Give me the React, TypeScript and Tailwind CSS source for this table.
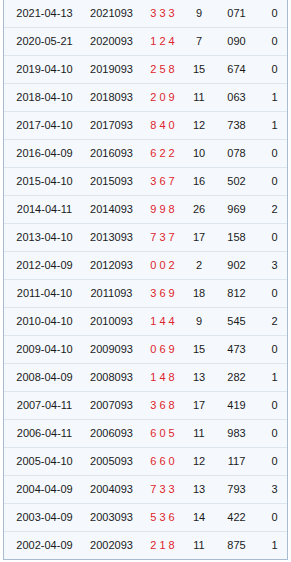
import React from 'react';

type Draw = {
  date: string;
  issue: string;
  nums: string;
  sum: string;
  code: string;
  flag: string;
};

const rows: Draw[] = [
  { date: '2021-04-13', issue: '2021093', nums: '3 3 3', sum: '9', code: '071', flag: '0' },
  { date: '2020-05-21', issue: '2020093', nums: '1 2 4', sum: '7', code: '090', flag: '0' },
  { date: '2019-04-10', issue: '2019093', nums: '2 5 8', sum: '15', code: '674', flag: '0' },
  { date: '2018-04-10', issue: '2018093', nums: '2 0 9', sum: '11', code: '063', flag: '1' },
  { date: '2017-04-10', issue: '2017093', nums: '8 4 0', sum: '12', code: '738', flag: '1' },
  { date: '2016-04-09', issue: '2016093', nums: '6 2 2', sum: '10', code: '078', flag: '0' },
  { date: '2015-04-10', issue: '2015093', nums: '3 6 7', sum: '16', code: '502', flag: '0' },
  { date: '2014-04-11', issue: '2014093', nums: '9 9 8', sum: '26', code: '969', flag: '2' },
  { date: '2013-04-10', issue: '2013093', nums: '7 3 7', sum: '17', code: '158', flag: '0' },
  { date: '2012-04-09', issue: '2012093', nums: '0 0 2', sum: '2', code: '902', flag: '3' },
  { date: '2011-04-10', issue: '2011093', nums: '3 6 9', sum: '18', code: '812', flag: '0' },
  { date: '2010-04-10', issue: '2010093', nums: '1 4 4', sum: '9', code: '545', flag: '2' },
  { date: '2009-04-10', issue: '2009093', nums: '0 6 9', sum: '15', code: '473', flag: '0' },
  { date: '2008-04-09', issue: '2008093', nums: '1 4 8', sum: '13', code: '282', flag: '1' },
  { date: '2007-04-11', issue: '2007093', nums: '3 6 8', sum: '17', code: '419', flag: '0' },
  { date: '2006-04-11', issue: '2006093', nums: '6 0 5', sum: '11', code: '983', flag: '0' },
  { date: '2005-04-10', issue: '2005093', nums: '6 6 0', sum: '12', code: '117', flag: '0' },
  { date: '2004-04-09', issue: '2004093', nums: '7 3 3', sum: '13', code: '793', flag: '3' },
  { date: '2003-04-09', issue: '2003093', nums: '5 3 6', sum: '14', code: '422', flag: '0' },
  { date: '2002-04-09', issue: '2002093', nums: '2 1 8', sum: '11', code: '875', flag: '1' },
];

export default function App() {
  return (
    <div className="min-h-[562px] bg-white pl-[3px] w-[291px]">
      <div
        className="w-[285px] bg-[#f5f9fe] border-l border-r border-b border-[#a8bbd0] text-[11px] text-[#1a1a1a]"
        style={{ fontFamily: '"Liberation Sans", Arial, sans-serif' }}
      >
        {rows.map((r, i) => (
          <div
            key={r.issue}
            className={
              'grid grid-cols-[81px_53px_49px_24px_51px_1fr] items-center text-center' +
              (i < rows.length - 1 ? ' h-[28px] border-b border-[#dde5ee]' : ' h-[27px]')
            }
          >
            <span>{r.date}</span>
            <span>{r.issue}</span>
            <span className="text-[#e0242c] whitespace-pre">{r.nums}</span>
            <span>{r.sum}</span>
            <span>{r.code}</span>
            <span>{r.flag}</span>
          </div>
        ))}
      </div>
    </div>
  );
}
